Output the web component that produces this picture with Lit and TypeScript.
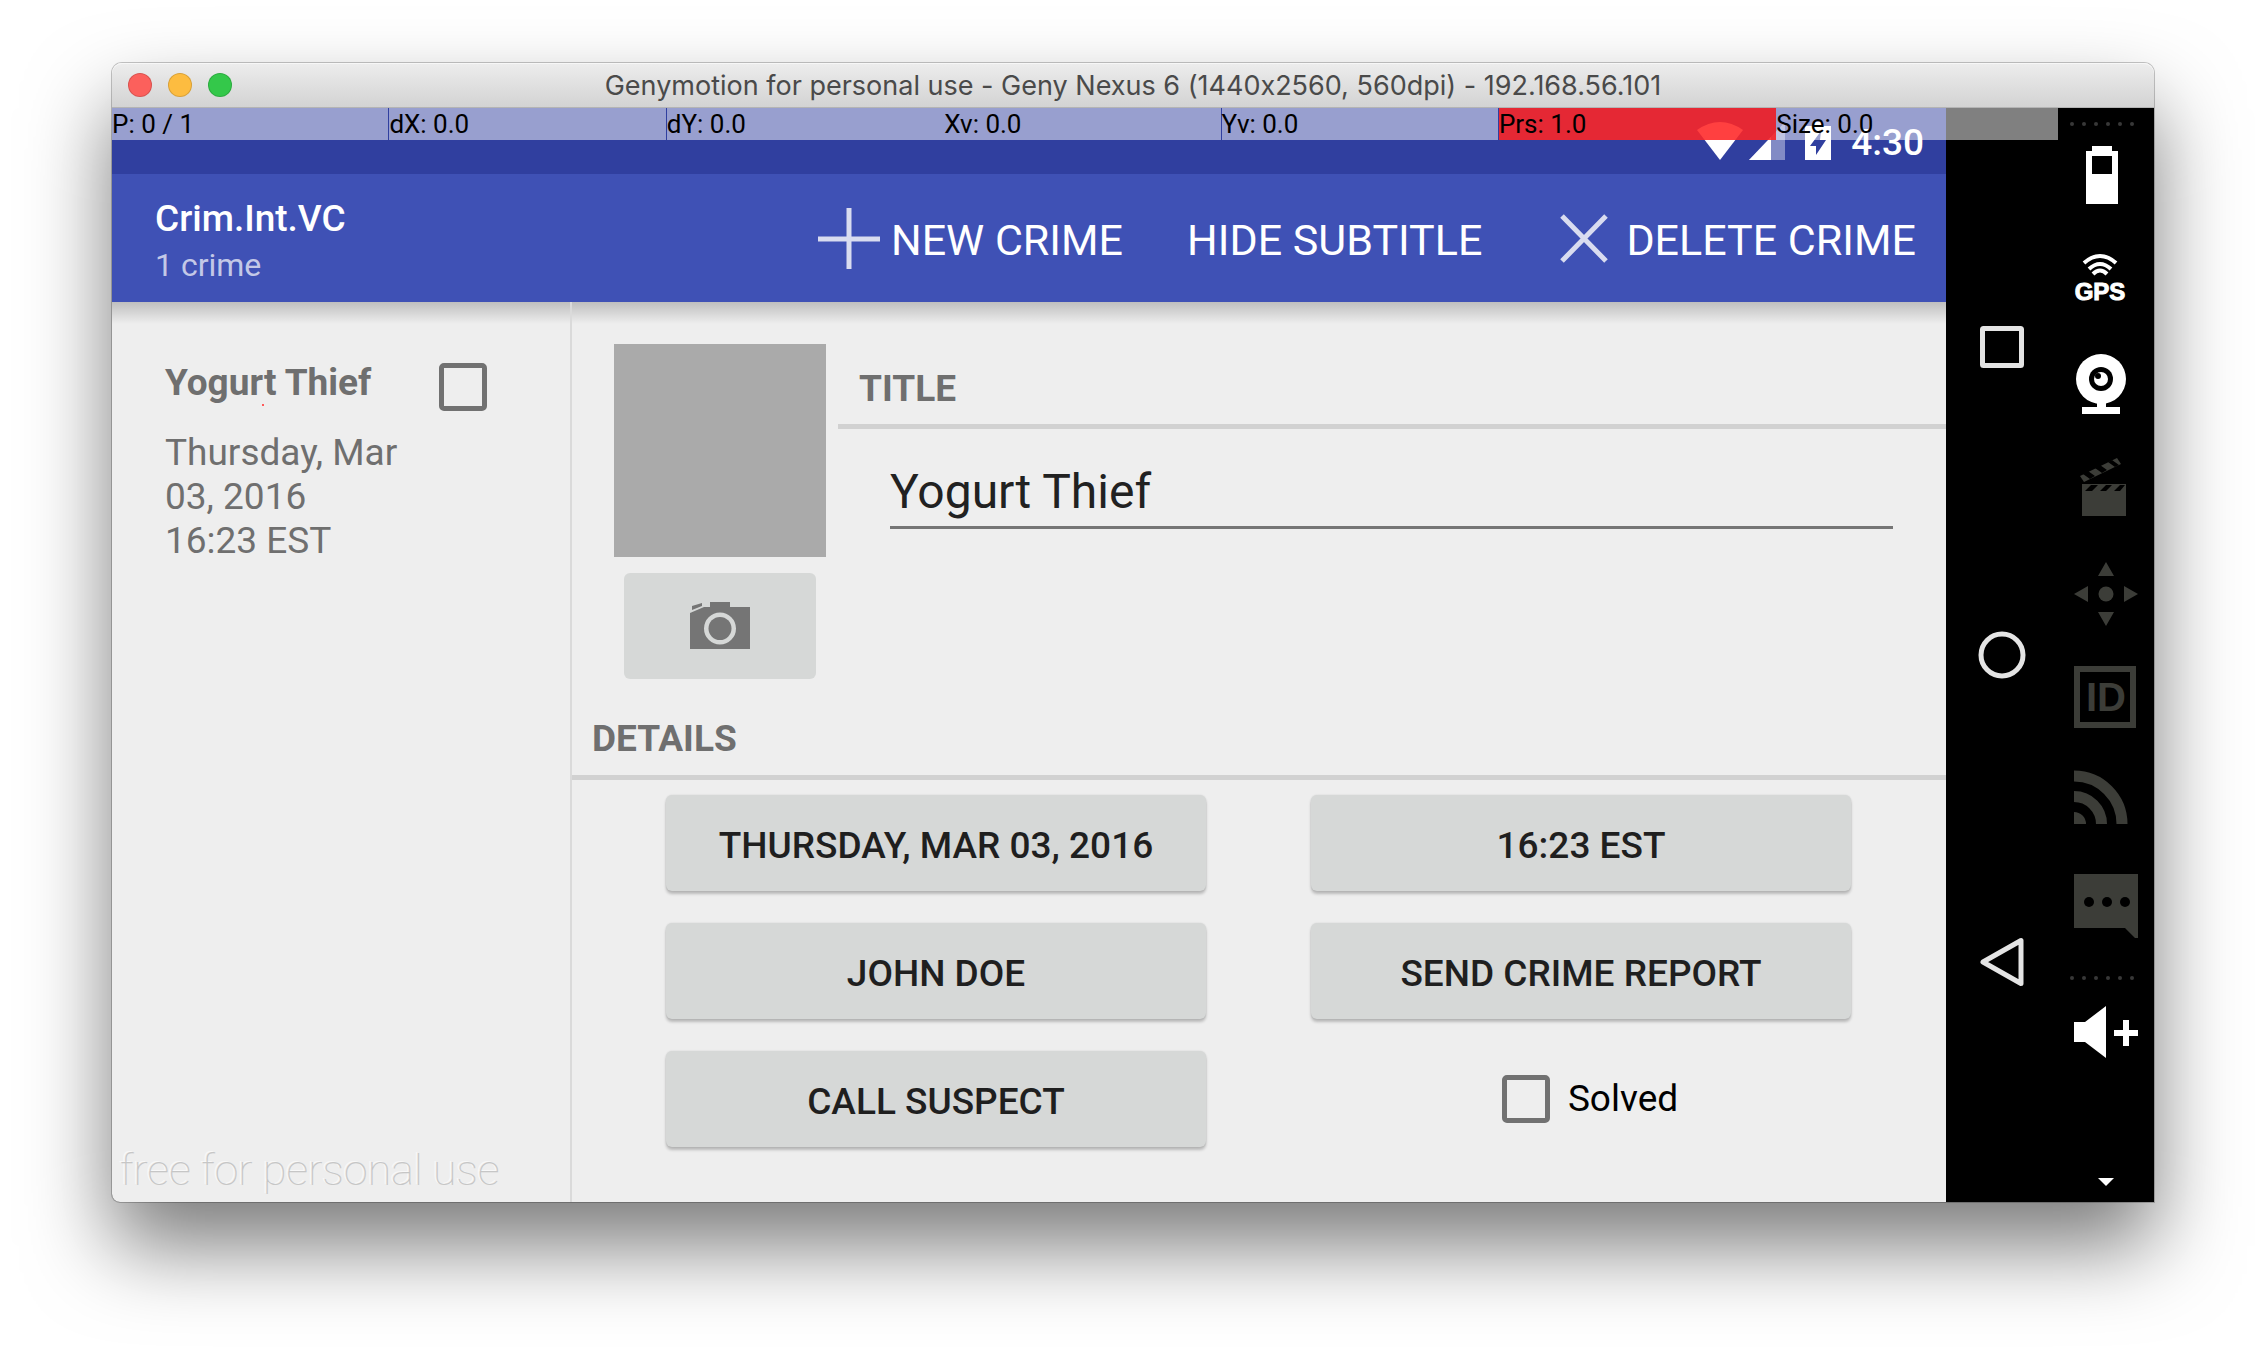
import { LitElement, html, css, svg } from "lit";
import { customElement, state } from "lit/decorators.js";
import { classMap } from "lit/directives/class-map.js";

const pointerCells = [
  { text: "P: 0 / 1", split: true, hot: false },
  { text: "dX: 0.0", split: true, hot: false },
  { text: "dY: 0.0", split: false, hot: false },
  { text: "Xv: 0.0", split: true, hot: false },
  { text: "Yv: 0.0", split: true, hot: false },
  { text: "Prs: 1.0", split: false, hot: true },
  { text: "Size: 0.0", split: false, hot: false },
];

const tools = [
  {
    name: "Battery",
    on: true,
    art: svg`<path fill-rule="evenodd" d="M34 7h20v5h6v53H28V12h6z M34 17v18h20V17z"/>`,
  },
  {
    name: "GPS",
    on: true,
    art: svg`<g fill="none" stroke="currentColor" stroke-width="4">
        <path d="M26 21Q42 7 58 21"/><path d="M31 27Q42 17 53 27"/><path d="M35 32Q42 25 49 32"/>
      </g>
      <text x="42" y="58" text-anchor="middle" class="gps">GPS</text>`,
  },
  {
    name: "Camera",
    on: true,
    art: svg`<circle cx="43" cy="34" r="25"/><path d="M39 58h9v4h14v7H24v-7h15z"/>
      <circle cx="43" cy="34" r="12" fill="#000"/><circle cx="43" cy="34" r="7"/>
      <circle cx="40" cy="31" r="3" fill="#000"/>`,
  },
  {
    name: "Screencast",
    on: false,
    art: svg`<path d="M24 36h44v32H24z"/>
      <path d="M22 28L59 10L63 16L26 34z"/>
      <path fill="#000" d="M27 43l6-6h7l-6 6z M42 43l6-6h6l-6 6z M56 43l6-6h5l-5 6z M25 26l7 5 5-3-7-5z M37 20l7 5 5-3-7-5z M50 14l7 5 4-2-7-5z"/>`,
  },
  {
    name: "Remote control",
    on: false,
    art: svg`<circle cx="48" cy="43" r="7.5"/>
      <path d="M48 11l8 14H40z M48 75l8-14H40z M16 43l14-8v16z M80 43l-14-8v16z"/>`,
  },
  {
    name: "Identifiers",
    on: false,
    art: svg`<path fill="none" stroke="currentColor" stroke-width="6" d="M19 15h56v56H19z"/>
      <text x="48" y="57" text-anchor="middle" class="ident">ID</text>`,
  },
  {
    name: "Network",
    on: false,
    art: svg`<path d="M16 55a12 12 0 0 1 12 12H16z"/>
      <path fill="none" stroke="currentColor" stroke-width="11" d="M16 39.500a27.500 27.500 0 0 1 27.500 27.500 M16 19a48 48 0 0 1 48 48"/>`,
  },
  {
    name: "Messages",
    on: false,
    art: svg`<path d="M16 14h64v64h-3L67 68H16z"/>
      <g fill="#000"><circle cx="31" cy="42" r="5"/><circle cx="49" cy="42" r="5"/><circle cx="67" cy="42" r="5"/></g>`,
  },
];

@customElement("app-root")
export class AppRoot extends LitElement {
  @state() private crimeTitle = "Yogurt Thief";
  @state() private solved = false;

  static styles = css`
    :host {
      display: flex;
      min-height: 100vh;
      box-sizing: border-box;
      padding: 63px 112px 160px;
      background: #fff;
      overflow: hidden;
      font-family: Roboto, "Liberation Sans", sans-serif;
      font-size: 37px;
      line-height: 44px;
    }
    * {
      box-sizing: border-box;
    }
    button,
    input {
      font: inherit;
      color: inherit;
      margin: 0;
      padding: 0;
      border: 0;
      background: none;
    }
    svg {
      display: block;
      flex: none;
    }
    .window {
      flex: 1;
      display: flex;
      flex-direction: column;
      border-radius: 10px 10px 0 8px;
      box-shadow: 0 0 0 1px rgba(0, 0, 0, 0.22), 0 44px 84px rgba(0, 0, 0, 0.52);
    }
    .titlebar {
      display: grid;
      grid-template-columns: 1fr auto 1fr;
      align-items: center;
      height: 45px;
      padding: 0 16px;
      border-radius: 10px 10px 0 0;
      border-bottom: 1px solid #b4b4b4;
      background: linear-gradient(#ededed, #d3d3d3);
      box-shadow: inset 0 1px 0 #f7f7f7;
    }
    .lights {
      display: flex;
      gap: 16px;
    }
    .light {
      width: 24px;
      height: 24px;
      border-radius: 50%;
      border: 1px solid rgba(0, 0, 0, 0.14);
    }
    .close {
      background: #fc605c;
    }
    .minimise {
      background: #fdbc40;
    }
    .zoom {
      background: #34c84a;
    }
    .caption {
      margin: 0;
      padding-top: 2px;
      font: 400 27px/32px Inter, "Liberation Sans", sans-serif;
      font-feature-settings: "calt" 0;
      color: #4a4a4a;
    }
    .body {
      flex: 1;
      display: flex;
    }
    .device {
      flex: 1;
      display: flex;
      position: relative;
      background: #000;
      border-radius: 0 0 0 8px;
    }
    .pointer {
      position: absolute;
      inset: 0 0 auto 0;
      display: grid;
      grid-template-columns: repeat(6, 64fr) 65fr;
      height: 32px;
      font-size: 26px;
      line-height: 32px;
      color: #000;
    }
    .cell {
      background: rgba(255, 255, 255, 0.5);
    }
    .split {
      margin-right: 1px;
    }
    .hot {
      background: linear-gradient(rgba(255, 0, 0, 0.75), rgba(255, 0, 0, 0.75)), rgba(255, 255, 255, 0.5);
    }
    .screen {
      flex: 1;
      display: flex;
      flex-direction: column;
      background: #eee;
      border-radius: 0 0 0 8px;
    }
    .status {
      display: flex;
      justify-content: flex-end;
      gap: 20px;
      height: 66px;
      padding: 13px 22px 0 0;
      background: #303f9f;
      color: #fff;
      font-weight: 500;
    }
    .signals {
      display: flex;
      gap: 6px;
    }
    .appbar {
      display: flex;
      justify-content: space-between;
      height: 128px;
      padding: 0 30px 0 43px;
      background: #3f51b5;
      color: #fff;
    }
    .heading {
      display: flex;
      flex-direction: column;
      gap: 5px;
      padding-top: 23px;
    }
    .appname {
      margin: 0;
      font-size: 37px;
      line-height: 44px;
      font-weight: 500;
    }
    .subtitle {
      margin: 0;
      font-size: 32px;
      line-height: 38px;
      color: rgba(255, 255, 255, 0.7);
    }
    .menu {
      display: flex;
      align-items: stretch;
      gap: 64px;
    }
    .action {
      display: flex;
      align-items: center;
      gap: 4px;
      font-size: 43px;
      line-height: 52px;
    }
    .action-text {
      padding-top: 4px;
    }
    .content {
      flex: 1;
      display: flex;
      background: linear-gradient(rgba(0, 0, 0, 0.2), rgba(0, 0, 0, 0)) top / 100% 22px no-repeat;
    }
    .list {
      display: flex;
      flex-direction: column;
      justify-content: space-between;
      width: 460px;
      border-right: 2px solid #dadada;
    }
    .crime {
      position: relative;
      display: flex;
      align-items: flex-start;
      padding: 59px 83px 0 53px;
      color: #6f6f6f;
    }
    .crime-text {
      flex: 1;
      display: flex;
      flex-direction: column;
    }
    .crime-name {
      margin: 0 0 26px;
      font-size: 37px;
      line-height: 44px;
      font-weight: 700;
    }
    .touch {
      position: absolute;
      left: 150px;
      top: 102px;
      width: 2px;
      height: 2px;
      background: #ff5a5a;
    }
    .tick {
      appearance: none;
      width: 48px;
      height: 48px;
      border: 5px solid #717171;
      border-radius: 5px;
    }
    .tick:checked {
      background: #717171;
    }
    .crime-tick {
      margin-top: 2px;
    }
    .watermark {
      margin: 0;
      padding: 0 0 4px 8px;
      font-size: 43px;
      line-height: 56px;
      font-weight: 100;
      color: #c6c6c6;
      text-shadow: -2px -1px 0 #f8f8f8;
    }
    .detail {
      flex: 1;
    }
    .top {
      display: flex;
      gap: 12px;
      padding: 42px 0 0 42px;
    }
    .photo-column {
      display: flex;
      flex-direction: column;
      align-items: center;
      gap: 16px;
    }
    .photo {
      width: 212px;
      height: 213px;
      background: #aaa;
    }
    .camera {
      display: grid;
      place-items: center;
      width: 192px;
      height: 106px;
      border-radius: 6px;
      background: #d6d8d7;
      color: #757575;
    }
    .title-column {
      flex: 1;
    }
    .section {
      display: block;
      margin: 0;
      border-bottom: 5px solid #d1d1d1;
      font-size: 37px;
      line-height: 44px;
      font-weight: 700;
      color: #6f6f6f;
    }
    .title-label {
      padding: 23px 21px 13px;
    }
    .details-label {
      padding: 38px 20px 14px;
    }
    .field {
      padding: 35px 53px 0 52px;
    }
    .title-input {
      display: block;
      width: 100%;
      height: 65px;
      padding-bottom: 8px;
      border-bottom: 3px solid #757575;
      border-radius: 0;
      outline: none;
      font-size: 48px;
      line-height: 54px;
      color: #212121;
    }
    .grid {
      display: grid;
      grid-template-columns: 1fr 1fr;
      gap: 32px 105px;
      padding: 15px 95px 48px 94px;
    }
    .raised {
      height: 96px;
      padding-top: 5px;
      border-radius: 6px;
      background: #d6d8d7;
      box-shadow: 0 3px 3px rgba(0, 0, 0, 0.22), 0 0 2px rgba(0, 0, 0, 0.12);
      font-weight: 500;
      color: #1f1f1f;
    }
    .solved {
      display: flex;
      align-items: center;
      justify-content: center;
      gap: 18px;
      padding-left: 18px;
      color: #000;
    }
    .nav {
      display: flex;
      flex-direction: column;
      align-items: center;
      justify-content: center;
      gap: 256px;
      width: 112px;
      background: #000;
    }
    .toolbar {
      display: flex;
      flex-direction: column;
      width: 96px;
      padding: 1px 0 12px;
      background: #000;
    }
    .dots {
      fill: #383838;
    }
    .tool {
      display: block;
      color: #3c3d38;
      fill: currentColor;
    }
    .tool.on {
      color: #fff;
    }
    .gps {
      font: 700 24px "Liberation Sans", sans-serif;
      stroke: currentColor;
      stroke-width: 1px;
    }
    .ident {
      font: 700 40px "Liberation Sans", sans-serif;
    }
    .more {
      margin-top: auto;
      fill: #fff;
    }
  `;

  private dots() {
    return html`<svg class="dots" width="96" height="30" viewBox="0 0 96 30" aria-hidden="true">
      ${[14, 26, 38, 50, 62, 74].map((x) => svg`<circle cx=${x} cy="15" r="2"/>`)}
    </svg>`;
  }

  private statusBar() {
    return html`<div class="status">
      <div class="signals">
        <svg width="46" height="40" viewBox="0 0 46 40" fill="#fff" aria-hidden="true">
          <path d="M23 39L0 9Q23 -7 46 9z" />
        </svg>
        <svg width="36" height="40" viewBox="0 0 36 40" fill="#fff" aria-hidden="true">
          <path opacity=".4" d="M0 39L36 1v38z" />
          <path d="M0 39L22 16v23z" />
        </svg>
      </div>
      <svg width="26" height="40" viewBox="0 0 26 40" fill="#fff" aria-hidden="true">
        <path fill-rule="evenodd" d="M8 1h10v4h8v34H0V5h8z M16 10L5 25h6v9l10-15h-6z" />
      </svg>
      <span>4:30</span>
    </div>`;
  }

  private appBar() {
    return html`<header class="appbar">
      <div class="heading">
        <h1 class="appname">Crim.Int.VC</h1>
        <p class="subtitle">1 crime</p>
      </div>
      <nav class="menu">
        <button class="action">
          <svg width="76" height="64" viewBox="0 0 76 64" stroke="#d9dcf0" stroke-width="5" aria-hidden="true">
            <path d="M38 2v61M7 33h62" />
          </svg>
          <span class="action-text">NEW CRIME</span>
        </button>
        <button class="action"><span class="action-text">HIDE SUBTITLE</span></button>
        <button class="action">
          <svg width="76" height="64" viewBox="0 0 76 64" stroke="#d9dcf0" stroke-width="5" aria-hidden="true">
            <path d="M16 10L60 55M60 10L16 55" />
          </svg>
          <span class="action-text">DELETE CRIME</span>
        </button>
      </nav>
    </header>`;
  }

  private list() {
    return html`<aside class="list">
      <article class="crime">
        <div class="crime-text">
          <h2 class="crime-name">${this.crimeTitle}</h2>
          <span>Thursday, Mar 03, 2016</span>
          <span>16:23 EST</span>
        </div>
        <input class="tick crime-tick" type="checkbox" aria-label="Solved: Yogurt Thief" />
        <i class="touch"></i>
      </article>
      <p class="watermark">free for personal use</p>
    </aside>`;
  }

  private detail() {
    return html`<main class="detail">
      <div class="top">
        <div class="photo-column">
          <div class="photo"></div>
          <button class="camera" aria-label="Take photo">
            <svg width="60" height="50" viewBox="0 0 60 50" fill="currentColor" aria-hidden="true">
              <path fill-rule="evenodd" d="M0 12L14 6h6V1h20v5h20v42H0z M30 11.500a16 16 0 1 0 0 32a16 16 0 1 0 0-32z" />
              <path d="M2 5L12 2v3L2 9z" />
              <circle cx="30" cy="27.500" r="11.500" />
            </svg>
          </button>
        </div>
        <div class="title-column">
          <label class="section title-label" for="title">TITLE</label>
          <div class="field">
            <input
              id="title"
              class="title-input"
              type="text"
              spellcheck="false"
              .value=${this.crimeTitle}
              @input=${(e: Event) => (this.crimeTitle = (e.target as HTMLInputElement).value)}
            />
          </div>
        </div>
      </div>
      <h2 class="section details-label">DETAILS</h2>
      <div class="grid">
        <button class="raised">THURSDAY, MAR 03, 2016</button>
        <button class="raised">16:23 EST</button>
        <button class="raised">JOHN DOE</button>
        <button class="raised">SEND CRIME REPORT</button>
        <button class="raised">CALL SUSPECT</button>
        <label class="solved">
          <input
            class="tick"
            type="checkbox"
            .checked=${this.solved}
            @change=${(e: Event) => (this.solved = (e.target as HTMLInputElement).checked)}
          />
          <span>Solved</span>
        </label>
      </div>
    </main>`;
  }

  private nav() {
    return html`<nav class="nav">
      <button aria-label="Recents">
        <svg width="52" height="52" viewBox="0 0 52 52" fill="none" stroke="#e4e4e4" stroke-width="5">
          <rect x="6.500" y="7.500" width="39" height="37" rx="1" />
        </svg>
      </button>
      <button aria-label="Home">
        <svg width="52" height="52" viewBox="0 0 52 52" fill="none" stroke="#e4e4e4" stroke-width="5">
          <circle cx="26" cy="26" r="21" />
        </svg>
      </button>
      <button aria-label="Back">
        <svg width="52" height="52" viewBox="0 0 52 52" fill="none" stroke="#e4e4e4" stroke-width="5" stroke-linejoin="round">
          <path d="M45 3.500v43L7 25z" />
        </svg>
      </button>
    </nav>`;
  }

  private toolbar() {
    return html`<div class="toolbar">
      ${this.dots()}
      ${tools.map(
        (t) => html`<button class=${classMap({ tool: true, on: t.on })} aria-label=${t.name}>
          <svg width="96" height="103" viewBox="0 0 96 103">${t.art}</svg>
        </button>`
      )}
      ${this.dots()}
      <button class="tool on" aria-label="Volume up">
        <svg width="96" height="103" viewBox="0 0 96 103">
          <path d="M16 29h11L48 13v52L27 49H16z M56 37h9v-10h6v10h9v6h-9v10h-6v-10h-9z" />
        </svg>
      </button>
      <button class="more" aria-label="More tools">
        <svg width="96" height="16" viewBox="0 0 96 16"><path d="M40 4h16l-8 8z" /></svg>
      </button>
    </div>`;
  }

  render() {
    return html`<div class="window">
      <div class="titlebar">
        <div class="lights">
          <button class="light close" aria-label="Close"></button>
          <button class="light minimise" aria-label="Minimise"></button>
          <button class="light zoom" aria-label="Zoom"></button>
        </div>
        <p class="caption">Genymotion for personal use - Geny Nexus 6 (1440x2560, 560dpi) - 192.168.56.101</p>
      </div>
      <div class="body">
        <div class="device">
          <div class="screen">
            ${this.statusBar()} ${this.appBar()}
            <div class="content">${this.list()} ${this.detail()}</div>
          </div>
          ${this.nav()}
          <div class="pointer">
            ${pointerCells.map(
              (c) => html`<span class=${classMap({ cell: true, split: c.split, hot: c.hot })}>${c.text}</span>`
            )}
          </div>
        </div>
        ${this.toolbar()}
      </div>
    </div>`;
  }
}
